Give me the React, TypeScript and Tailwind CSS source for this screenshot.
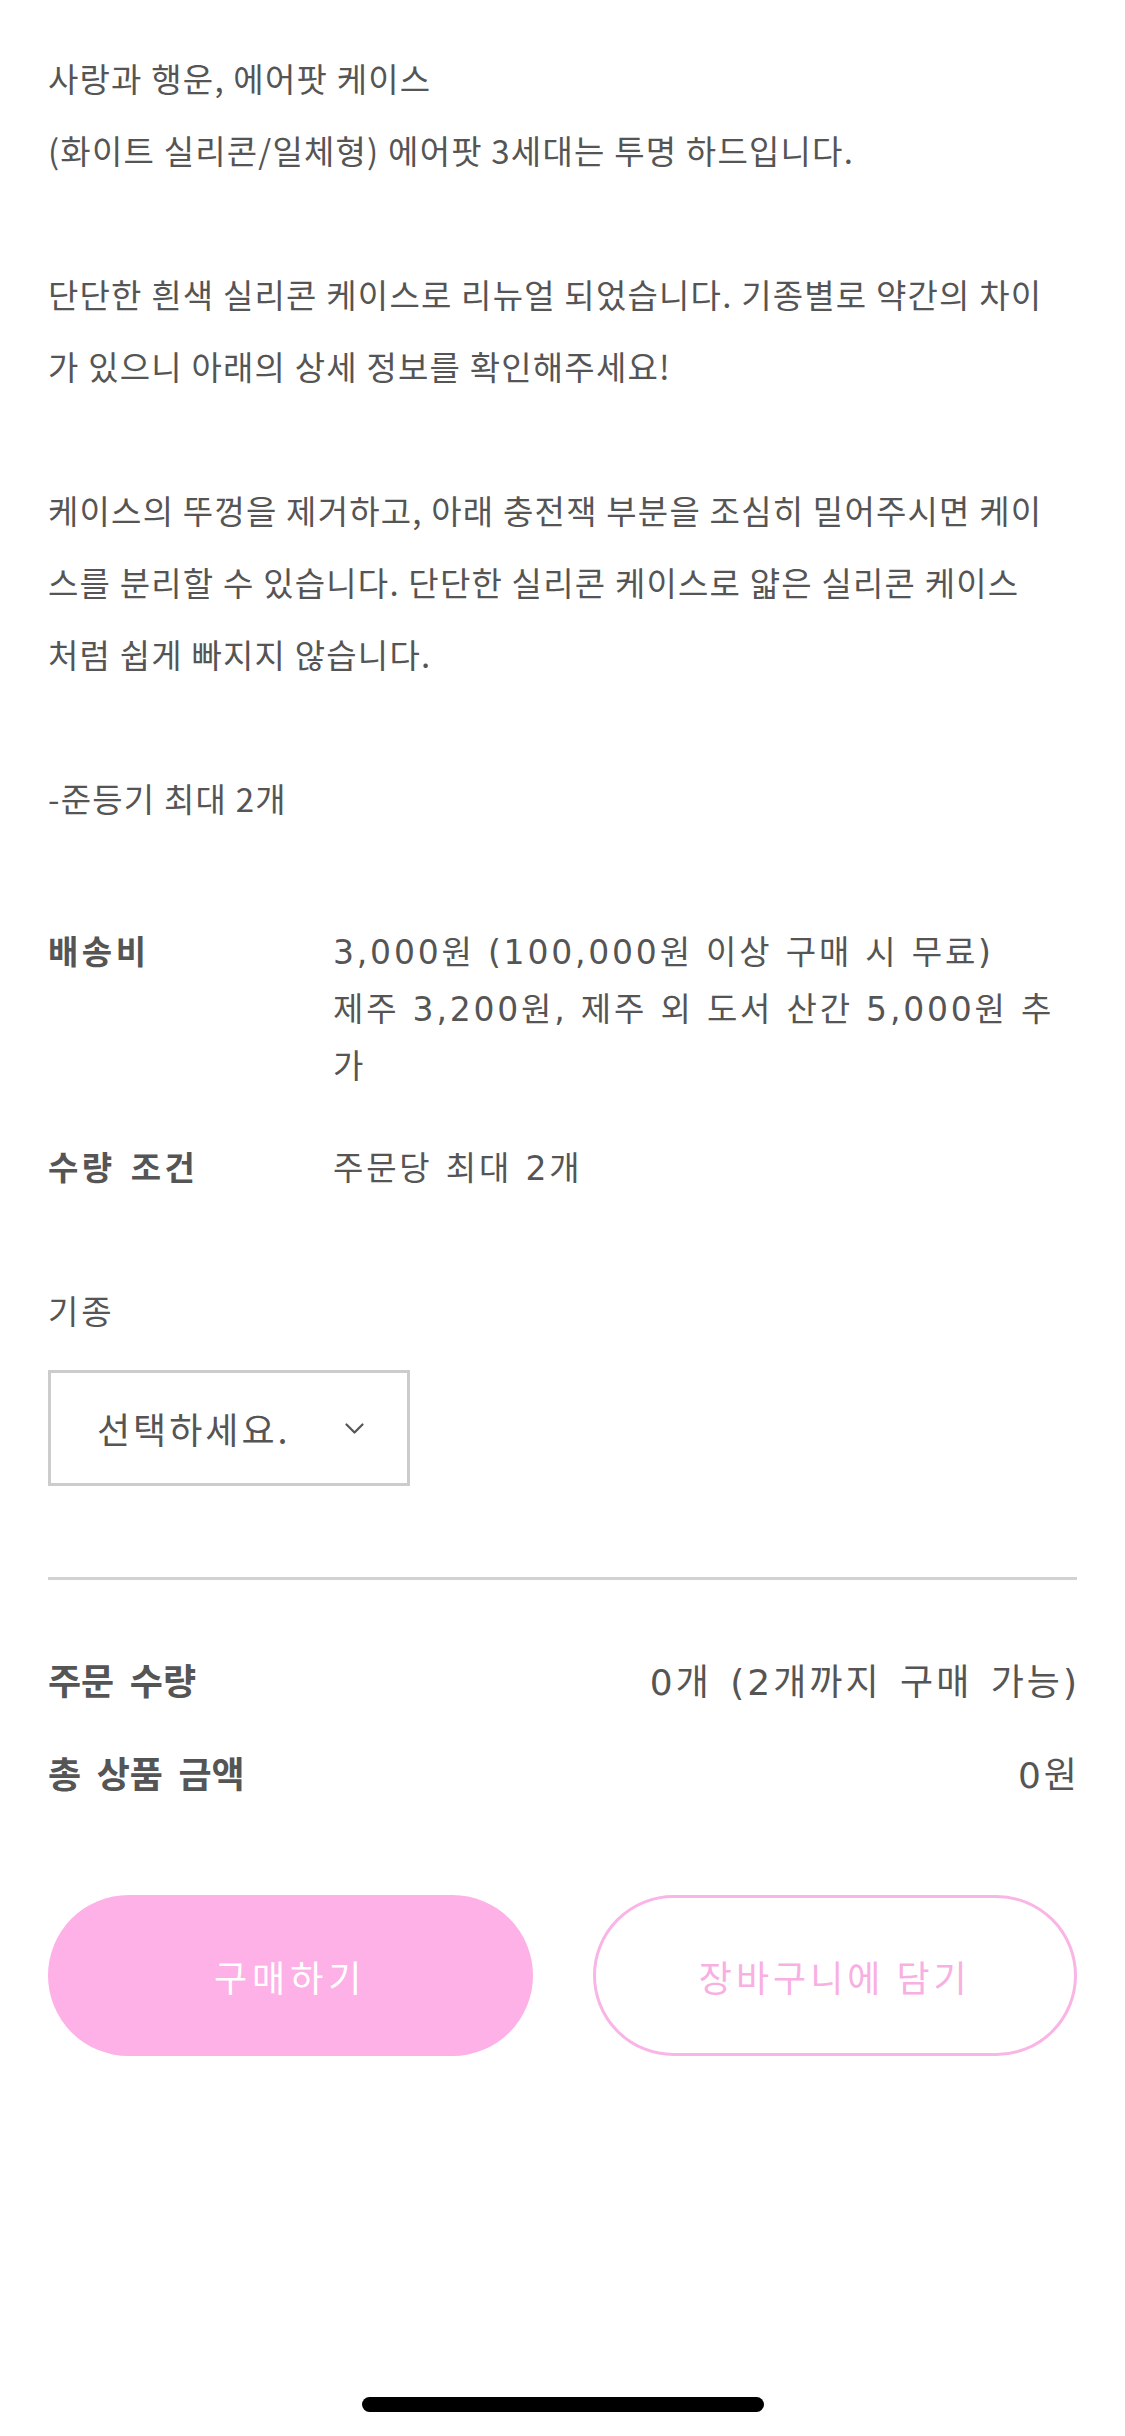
const paragraphs = [
  ["사랑과 행운, 에어팟 케이스", "(화이트 실리콘/일체형) 에어팟 3세대는 투명 하드입니다."],
  [
    "단단한 흰색 실리콘 케이스로 리뉴얼 되었습니다. 기종별로 약간의 차이",
    "가 있으니 아래의 상세 정보를 확인해주세요!",
  ],
  [
    "케이스의 뚜껑을 제거하고, 아래 충전잭 부분을 조심히 밀어주시면 케이",
    "스를 분리할 수 있습니다. 단단한 실리콘 케이스로 얇은 실리콘 케이스",
    "처럼 쉽게 빠지지 않습니다.",
  ],
  ["-준등기 최대 2개"],
];

const infoRows = [
  {
    label: "배송비",
    lines: ["3,000원 (100,000원 이상 구매 시 무료)", "제주 3,200원, 제주 외 도서 산간 5,000원 추", "가"],
  },
  { label: "수량 조건", lines: ["주문당 최대 2개"] },
];

const summary = [
  { label: "주문 수량", value: "0개 (2개까지 구매 가능)" },
  { label: "총 상품 금액", value: "0원" },
];

function Chevron() {
  return (
    <svg width="19" height="11" viewBox="0 0 19 11" fill="none">
      <polyline points="1.5,1.5 9.5,9.5 17.5,1.5" stroke="#555555" strokeWidth="2.2" strokeLinecap="round" strokeLinejoin="round" />
    </svg>
  );
}

export default function App() {
  return (
    <div className="min-h-[2436px] w-full bg-white flex flex-col text-[#555555] font-['Noto_Sans_CJK_KR','Noto_Sans',sans-serif]">
      <main className="px-[48px] pt-[42px]">
        {/* description */}
        <div className="text-[33px] leading-[72px] tracking-[1.2px] flex flex-col gap-[72px]">
          {paragraphs.map((lines, i) => (
            <p key={i}>
              {lines.map((line) => (
                <span key={line} className="block whitespace-nowrap">
                  {line}
                </span>
              ))}
            </p>
          ))}
        </div>

        {/* shipping info */}
        <div className="mt-[90px] flex flex-col gap-[45px] text-[33px] leading-[57px] font-['DejaVu_Sans','Noto_Sans_CJK_KR',sans-serif]">
          {infoRows.map((row) => (
            <div key={row.label} className="flex">
              <div className="w-[285px] shrink-0 font-bold tracking-[3.5px]">{row.label}</div>
              <div className="tracking-[2.8px]">
                {row.lines.map((line) => (
                  <span key={line} className="block whitespace-nowrap">
                    {line}
                  </span>
                ))}
              </div>
            </div>
          ))}
        </div>

        {/* option */}
        <div className="mt-[85px] text-[33px] leading-[57px] tracking-[3px]">기종</div>
        <button className="mt-[31px] w-[362px] h-[116px] border-[3px] border-[#cccccc] bg-white flex items-center justify-between pl-[46px] pr-[43px] text-[36px] tracking-[3px] text-[#555555]">
          <span>선택하세요.</span>
          <Chevron />
        </button>

        <div className="mt-[91px] h-[3px] bg-[#d2d2d2]" />

        {/* totals */}
        <div className="mt-[75px] flex flex-col gap-[37px] text-[36px] leading-[56px] font-['DejaVu_Sans','Noto_Sans_CJK_KR',sans-serif]">
          {summary.map((row) => (
            <div key={row.label} className="flex items-center justify-between">
              <span className="font-bold [word-spacing:3px]">{row.label}</span>
              <span className="tracking-[3px] [word-spacing:4px] -mr-[3px]">{row.value}</span>
            </div>
          ))}
        </div>

        {/* actions */}
        <div className="mt-[91px] grid grid-cols-2 gap-[60px]">
          <button className="h-[161px] rounded-full bg-[#fdb1e7] text-white text-[36px] tracking-[5px]">구매하기</button>
          <button className="h-[161px] rounded-full border-[3px] border-[#f9b5e6] bg-white text-[#f8b0e3] text-[36px] tracking-[4px]">
            장바구니에 담기
          </button>
        </div>
      </main>

      <div className="mt-auto mb-[24px] flex justify-center">
        <div className="w-[402px] h-[15px] rounded-full bg-black" />
      </div>
    </div>
  );
}
